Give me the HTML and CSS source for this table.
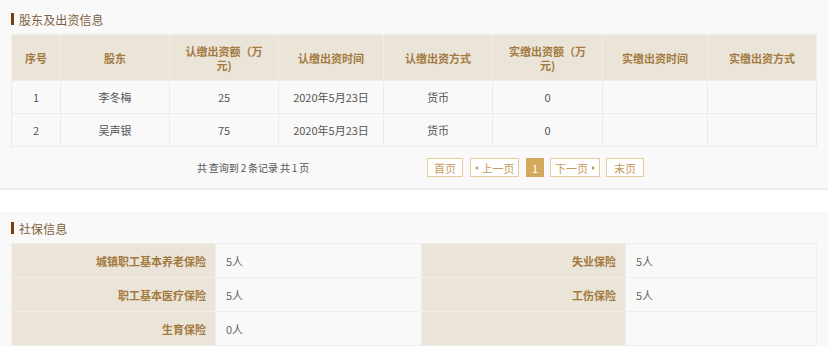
FILE: index.html
```html
<!DOCTYPE html>
<html lang="zh-CN">
<head>
<meta charset="utf-8">
<link rel="stylesheet" href="styles.css">
</head>
<body>
<section class="card card-first">
  <h2 class="sec-title"><span class="marker"></span>股东及出资信息</h2>
  <table class="grid">
    <colgroup>
      <col class="c1"><col class="c2"><col class="c3"><col class="c4"><col class="c5"><col class="c6"><col class="c7"><col class="c8">
    </colgroup>
    <thead>
      <tr>
        <th>序号</th><th>股东</th><th>认缴出资额（万元)</th><th>认缴出资时间</th><th>认缴出资方式</th><th>实缴出资额（万元)</th><th>实缴出资时间</th><th>实缴出资方式</th>
      </tr>
    </thead>
    <tbody>
      <tr><td>1</td><td>李冬梅</td><td>25</td><td>2020年5月23日</td><td>货币</td><td>0</td><td></td><td></td></tr>
      <tr><td>2</td><td>吴声银</td><td>75</td><td>2020年5月23日</td><td>货币</td><td>0</td><td></td><td></td></tr>
    </tbody>
  </table>
  <div class="pager-row">
    <span class="pager-info">共 查询到 2 条记录 共 1 页</span>
    <nav class="pager">
      <a class="pbtn w36">首页</a>
      <a class="pbtn w49"><i class="tri tri-l"></i>上一页</a>
      <a class="pbtn active">1</a>
      <a class="pbtn w50">下一页<i class="tri tri-r"></i></a>
      <a class="pbtn w38">末页</a>
    </nav>
  </div>
</section>
<section class="card card-second">
  <h2 class="sec-title"><span class="marker"></span>社保信息</h2>
  <table class="kv">
    <colgroup><col class="k1"><col class="v1"><col class="k2"><col class="v2"></colgroup>
    <tbody>
      <tr><th>城镇职工基本养老保险</th><td>5人</td><th>失业保险</th><td>5人</td></tr>
      <tr><th>职工基本医疗保险</th><td>5人</td><th>工伤保险</th><td>5人</td></tr>
      <tr><th>生育保险</th><td>0人</td><th></th><td></td></tr>
    </tbody>
  </table>
</section>
</body>
</html>
```

FILE: styles.css
```css
* { box-sizing: border-box; }
html, body { margin: 0; padding: 0; background: #ffffff; }
body {
  font-family: "Noto Sans CJK SC", "Noto Sans", sans-serif;
  font-size: 11px;
  color: #555;
  overflow: hidden;
}
.card {
  background: #f9f9f9;
  padding: 0 12px 0 11px;
}
.card-first {
  padding-top: 9px;
  border-bottom: 2px solid #eeeeee;
  height: 190px;
}
.card-second {
  margin-top: 22px;
  padding-top: 6px;
  height: 140px;
}
.sec-title {
  display: flex;
  align-items: center;
  margin: 0 0 5px 0;
  height: 20px;
  font-size: 12px;
  font-weight: normal;
  color: #7e5f41;
  letter-spacing: 0.1px;
}
.marker {
  width: 3px;
  height: 12px;
  background: #7a3e12;
  margin-right: 5px;
}
table {
  border-collapse: collapse;
  table-layout: fixed;
  width: 805px;
}
.grid col.c1 { width: 49px; }
.grid col.c2 { width: 109px; }
.grid col.c3 { width: 109px; }
.grid col.c4 { width: 105px; }
.grid col.c5 { width: 109px; }
.grid col.c6 { width: 110px; }
.grid col.c7 { width: 105px; }
.grid col.c8 { width: 109px; }
.grid th {
  height: 46px;
  background: #ebe4d9;
  color: #a27a3e;
  font-weight: bold;
  font-size: 11px;
  line-height: 14px;
  padding: 0 10px;
  border: 1px solid #f0ece6;
  text-align: center;
}
.grid td {
  height: 33px;
  text-align: center;
  border: 1px solid #ececec;
  color: #555;
  background: #f9f9f9;
}
.pager-row {
  display: flex;
  align-items: center;
  height: 41px;
}
.pager-info {
  margin-left: 186px;
  color: #555;
  width: 230px;
  font-size: 10px;
  word-spacing: -0.4px;
}
.pager {
  display: flex;
  align-items: center;
}
.pbtn {
  display: flex;
  align-items: center;
  justify-content: center;
  height: 19px;
  border: 1px solid #e6cb9c;
  color: #c49a5c;
  margin-right: 7px;
  font-size: 11px;
  background: #fff;
}
.pbtn.w36 { width: 36px; }
.pbtn.w49 { width: 49px; }
.pbtn.w50 { width: 50px; margin-left: -1px; }
.pbtn.w38 { width: 38px; margin-left: -1px; }
.pbtn.active {
  width: 18px;
  background: #d3a95b;
  border-color: #d3a95b;
  color: #fff;
}
.tri {
  display: inline-block;
  width: 0;
  height: 0;
  border-top: 2.5px solid transparent;
  border-bottom: 2.5px solid transparent;
}
.tri-l { border-right: 3px solid #c49a5c; margin-right: 4px; }
.tri-r { border-left: 3px solid #c49a5c; margin-left: 4px; }
.kv col.k1 { width: 204px; }
.kv col.v1 { width: 206px; }
.kv col.k2 { width: 204px; }
.kv col.v2 { width: 191px; }
.kv th, .kv td {
  height: 34px;
  border: 1px solid #f0eeea;
}
.kv th {
  background: #ebe4d9;
  color: #a27a3e;
  font-weight: bold;
  text-align: right;
  padding-right: 9px;
}
.kv td {
  background: #f9f9f9;
  color: #666;
  text-align: left;
  padding-left: 10px;
}
```
